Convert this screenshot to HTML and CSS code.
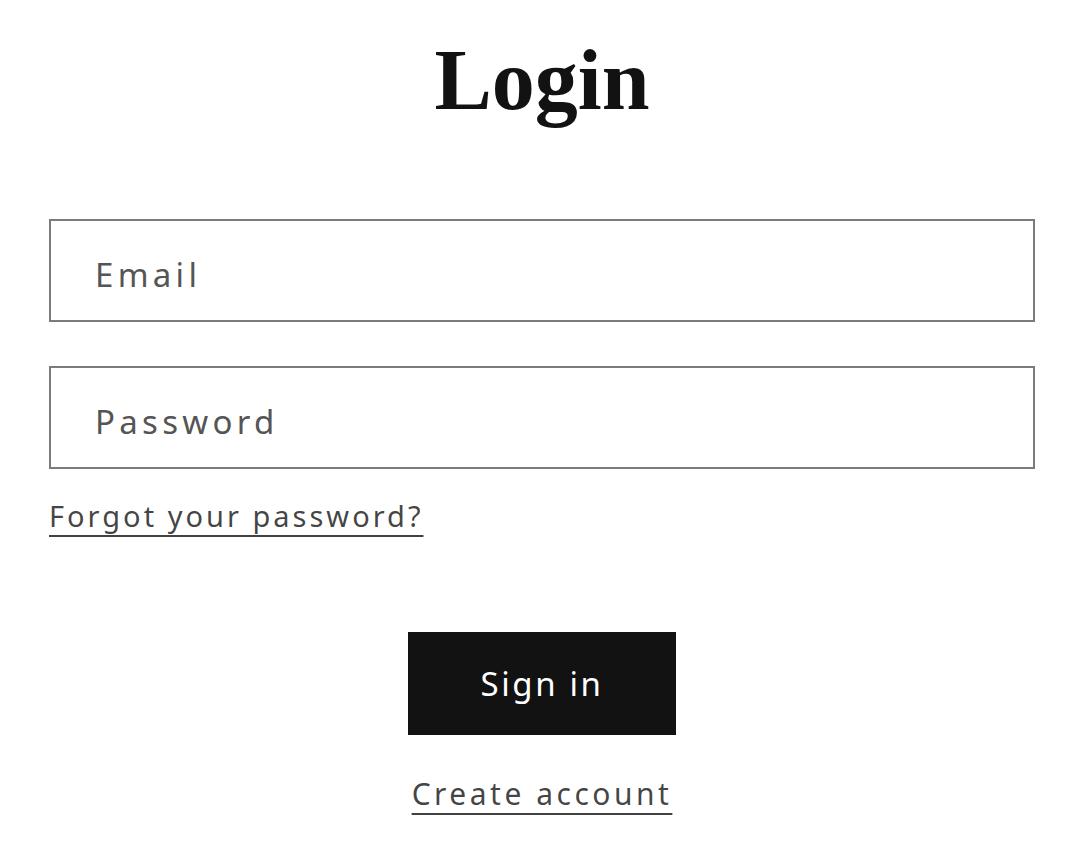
FILE: index.html
```html
<!DOCTYPE html>
<html lang="en">
<head>
    <meta charset="UTF-8">
    <meta name="viewport" content="width=device-width, initial-scale=1.0">
    <title>Login</title>
    <link rel="stylesheet" href="styles.css">
</head>
<body>
    <div class="login">
        <h1 class="login-title">Login</h1>
        <form class="login-form" onsubmit="return false;">
            <div class="field">
                <input type="email" id="email" class="field-input" placeholder="Email">
            </div>
            <div class="field">
                <input type="password" id="password" class="field-input" placeholder="Password">
            </div>
            <a href="#" class="link forgot">Forgot your password?</a>
            <div class="actions">
                <button class="btn" type="submit">Sign in</button>
                <a href="#" class="link create">Create account</a>
            </div>
        </form>
    </div>
</body>
</html>
```

FILE: styles.css
```css
body {
    margin: 0;
    background-color: #fff;
    font-family: "Noto Sans", sans-serif;
    color: rgba(18, 18, 18, 0.75);
}
.login {
    padding: 0 48px 0 49px;
}
.login-title {
    margin: 0;
    padding-top: 26px;
    text-align: center;
    font-family: "Liberation Serif", serif;
    font-weight: 700;
    font-size: 86px;
    line-height: 108px;
    color: #121212;
}
.login-form {
    display: flex;
    flex-direction: column;
    margin-top: 85px;
}
.field {
    margin-bottom: 44px;
}
.field:nth-child(2) {
    margin-bottom: 0;
}
.field-input {
    display: block;
    width: 100%;
    height: 103px;
    box-sizing: border-box;
    border: 2px solid #7b7b7b;
    padding: 8px 44px 0;
    font-family: inherit;
    font-size: 33px;
    letter-spacing: 4.3px;
    color: #121212;
    background: #fff;
    outline: none;
    border-radius: 0;
}
.field-input::placeholder {
    color: #555;
}
.link {
    color: rgba(18, 18, 18, 0.8);
    text-decoration: underline;
    text-decoration-thickness: 2px;
    text-underline-offset: 8px;
}
.forgot {
    align-self: flex-start;
    margin-top: 25px;
    font-size: 29px;
    line-height: 44px;
    letter-spacing: 3px;
}
.actions {
    display: flex;
    flex-direction: column;
    align-items: center;
    margin-top: 94px;
}
.btn {
    width: 268px;
    height: 103px;
    padding: 0;
    background-color: #121212;
    color: #fff;
    border: none;
    font-family: inherit;
    font-size: 33px;
    letter-spacing: 2.6px;
    cursor: pointer;
}
.create {
    margin-top: 37px;
    font-size: 30px;
    line-height: 44px;
    letter-spacing: 3.5px;
}
```
